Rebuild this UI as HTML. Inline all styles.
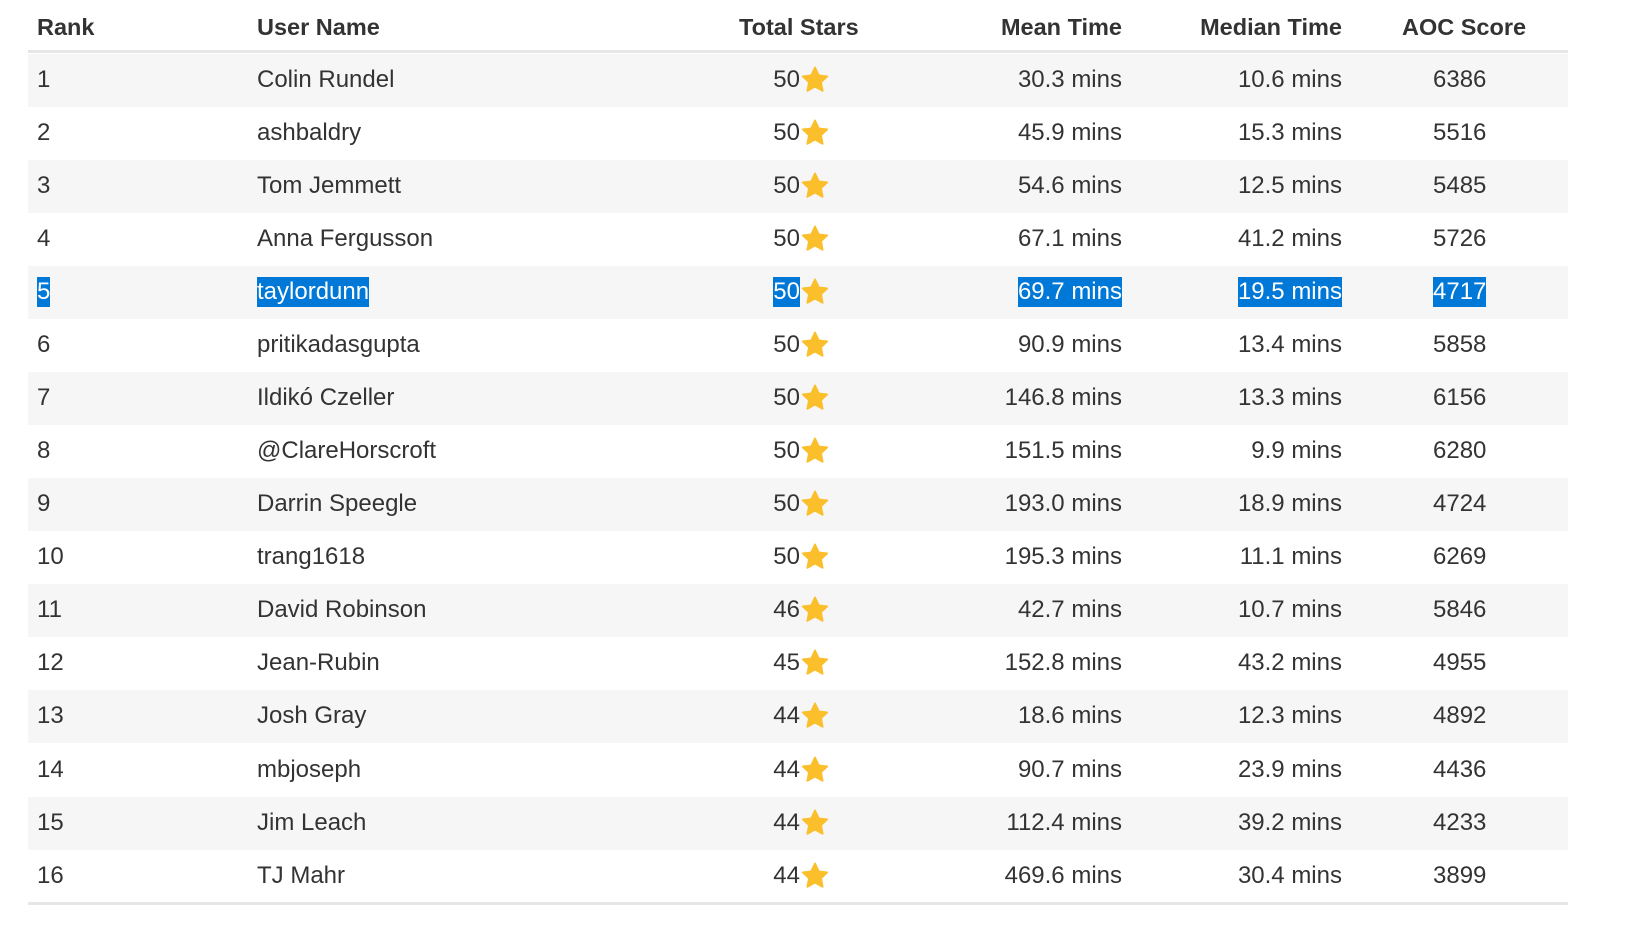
<!DOCTYPE html>
<html><head><meta charset="utf-8"><style>
body{margin:0;width:1633px;height:941px;background:#fff;font-family:"Liberation Sans",sans-serif;color:#333;position:relative;overflow:hidden}
.hd{position:absolute;top:14px;font-weight:bold;font-size:23.5px;color:#333}
.line{position:absolute;left:28px;width:1540px;top:50px;height:3px;background:#e6e6e6}
.row{position:absolute;left:28px;width:1540px;height:53px}
.row.odd{background:#f6f6f6}
.c{position:absolute;top:11px;font-size:24px;line-height:30px;white-space:nowrap}
.sel{background:#0078d7;color:#fff}
.star{position:absolute;top:11px;width:30px;height:30px}
</style></head><body>
<div class="hd" style="left:37px">Rank</div>
<div class="hd" style="left:257px">User Name</div>
<div class="hd" style="left:739px">Total Stars</div>
<div class="hd" style="right:511px">Mean Time</div>
<div class="hd" style="right:291px">Median Time</div>
<div class="hd" style="left:1402px">AOC Score</div>
<div class="line"></div>
<div class="line" style="top:902px"></div>
<div id="rows"></div>
<script>
var d=[["1","Colin Rundel","50","30.3","10.6","6386"],["2","ashbaldry","50","45.9","15.3","5516"],["3","Tom Jemmett","50","54.6","12.5","5485"],["4","Anna Fergusson","50","67.1","41.2","5726"],["5","taylordunn","50","69.7","19.5","4717"],["6","pritikadasgupta","50","90.9","13.4","5858"],["7","Ildikó Czeller","50","146.8","13.3","6156"],["8","@ClareHorscroft","50","151.5","9.9","6280"],["9","Darrin Speegle","50","193.0","18.9","4724"],["10","trang1618","50","195.3","11.1","6269"],["11","David Robinson","46","42.7","10.7","5846"],["12","Jean-Rubin","45","152.8","43.2","4955"],["13","Josh Gray","44","18.6","12.3","4892"],["14","mbjoseph","44","90.7","23.9","4436"],["15","Jim Leach","44","112.4","39.2","4233"],["16","TJ Mahr","44","469.6","30.4","3899"]];
var h="";
var star='<svg class="star" style="left:772px" viewBox="0 0 24 24"><path fill="#fbbf2c" stroke="#fbbf2c" stroke-width="1.5" stroke-linejoin="round" d="M12 2l3 6.3 6.8.8-5 4.7 1.3 6.8L12 17.2l-6.1 3.4 1.3-6.8-5-4.7 6.8-.8z"/></svg>';
d.forEach(function(r,i){
var top=53.5+i*53.08;var s=(i==4)?' sel':'';
h+='<div class="row'+(i%2==0?' odd':'')+'" style="top:'+top+'px">'+
'<div class="c'+s+'" style="left:9px">'+r[0]+'</div>'+
'<div class="c'+s+'" style="left:229px">'+r[1]+'</div>'+
'<div class="c'+s+'" style="right:768px">'+r[2]+'</div>'+star+
'<div class="c'+s+'" style="right:446px">'+r[3]+' mins</div>'+
'<div class="c'+s+'" style="right:226px">'+r[4]+' mins</div>'+
'<div class="c'+s+'" style="left:1405px">'+r[5]+'</div></div>';});
document.getElementById("rows").innerHTML=h;
</script>
</body></html>
